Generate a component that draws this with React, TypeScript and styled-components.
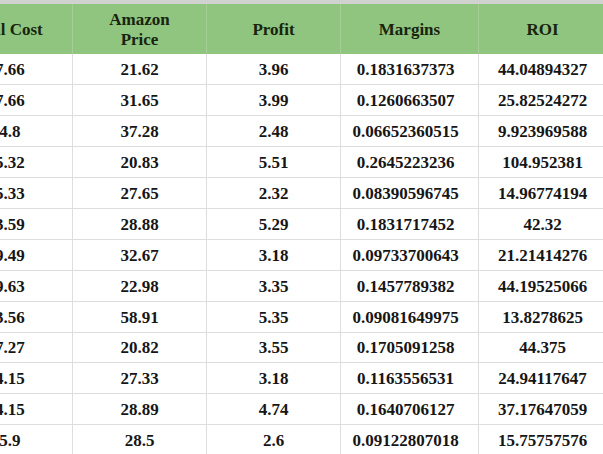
import React from "react";
import styled, { createGlobalStyle } from "styled-components";

const GlobalStyle = createGlobalStyle`
  html, body {
    margin: 0;
    padding: 0;
    background: #ffffff;
    overflow: hidden;
  }
`;

const serif = `"Liberation Serif", "Times New Roman", "DejaVu Serif", serif`;

const Viewport = styled.div`
  width: 603px;
  height: 454px;
  overflow: hidden;
  background: #ffffff;
  border-top: 4px solid #cfd2cf;
  box-sizing: border-box;
`;

const Sheet = styled.table`
  margin-left: -62px;
  border-collapse: collapse;
  table-layout: fixed;
  width: 668px;
  font-family: ${serif};
`;

const HeadCell = styled.th`
  height: 49px;
  padding: 1px 4px 0;
  background: #8fc57e;
  color: #18240f;
  font-family: ${serif};
  font-size: 17px;
  font-weight: bold;
  line-height: 20px;
  text-align: center;
  vertical-align: middle;
  border-left: 1px solid #a6cf98;
  border-right: 1px solid #a6cf98;
`;

const Row = styled.tr`
  height: 30.9px;
`;

const Cell = styled.td<{ $shift?: number }>`
  padding: 2px ${(p) => 2 + (p.$shift ?? 0)}px 0 2px;
  color: #161616;
  font-family: ${serif};
  font-size: 17px;
  font-weight: bold;
  text-align: center;
  vertical-align: middle;
  white-space: nowrap;
  border: 1px solid #dedede;
  border-top: none;
`;

const columns = ["Total Cost", "Amazon\nPrice", "Profit", "Margins", "ROI"];
const widths = [134, 134, 134, 138, 128];
// the margins column sits a little left of centre in the sheet
const shifts = [0, 0, 0, 8, 0];

const rows: string[][] = [
  ["17.66", "21.62", "3.96", "0.1831637373", "44.04894327"],
  ["27.66", "31.65", "3.99", "0.1260663507", "25.82524272"],
  ["34.8", "37.28", "2.48", "0.06652360515", "9.923969588"],
  ["15.32", "20.83", "5.51", "0.2645223236", "104.952381"],
  ["25.33", "27.65", "2.32", "0.08390596745", "14.96774194"],
  ["23.59", "28.88", "5.29", "0.1831717452", "42.32"],
  ["29.49", "32.67", "3.18", "0.09733700643", "21.21414276"],
  ["19.63", "22.98", "3.35", "0.1457789382", "44.19525066"],
  ["53.56", "58.91", "5.35", "0.09081649975", "13.8278625"],
  ["17.27", "20.82", "3.55", "0.1705091258", "44.375"],
  ["24.15", "27.33", "3.18", "0.1163556531", "24.94117647"],
  ["24.15", "28.89", "4.74", "0.1640706127", "37.17647059"],
  ["25.9", "28.5", "2.6", "0.09122807018", "15.75757576"],
];

const App: React.FC = () => {
  return (
    <>
      <GlobalStyle />
      <Viewport>
        <Sheet>
          <colgroup>
            {widths.map((w, i) => (
              <col key={i} style={{ width: w }} />
            ))}
          </colgroup>
          <thead>
            <tr>
              {columns.map((c) => (
                <HeadCell key={c}>
                  {c.split("\n").map((line, i) => (
                    <React.Fragment key={i}>
                      {i > 0 && <br />}
                      {line}
                    </React.Fragment>
                  ))}
                </HeadCell>
              ))}
            </tr>
          </thead>
          <tbody>
            {rows.map((r, i) => (
              <Row key={i}>
                {r.map((v, j) => (
                  <Cell key={j} $shift={shifts[j]}>
                    {v}
                  </Cell>
                ))}
              </Row>
            ))}
          </tbody>
        </Sheet>
      </Viewport>
    </>
  );
};

export default App;
